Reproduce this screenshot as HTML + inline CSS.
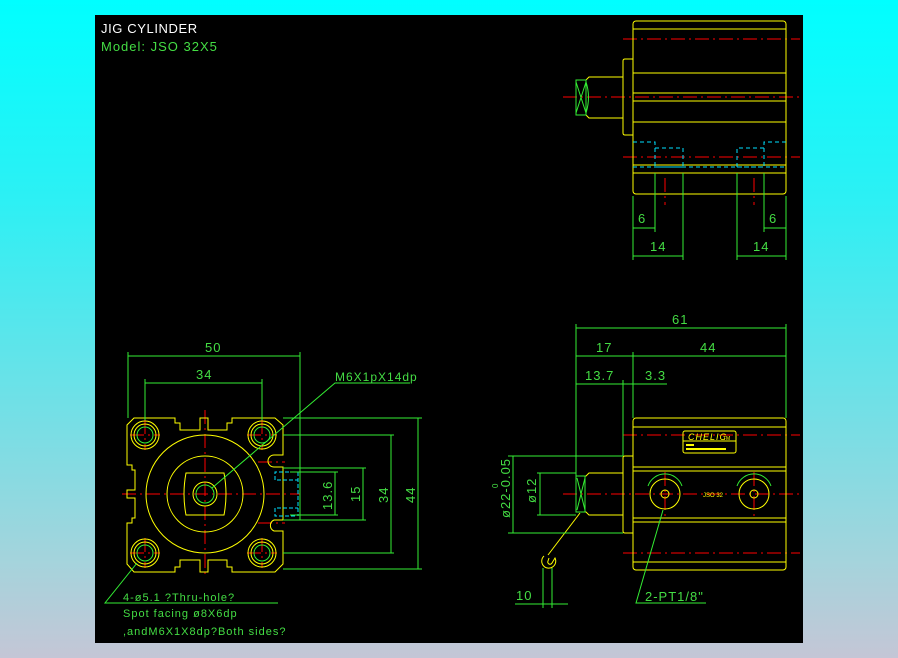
<!DOCTYPE html>
<html><head><meta charset="utf-8"><style>
html,body{margin:0;padding:0;width:898px;height:658px;overflow:hidden;background:linear-gradient(#00ffff 0%,#2cf0f4 30%,#a4d4dc 85%,#c4c6d6 100%);}
svg{position:absolute;left:0;top:0}
text{font-family:"Liberation Sans",sans-serif;}
</style></head><body>
<svg width="898" height="658" viewBox="0 0 898 658">
<rect x="95" y="15" width="708" height="628" fill="#000"/>
<text x="101" y="33" fill="#fff" font-size="13" letter-spacing="0.6">JIG  CYLINDER</text>
<text x="101" y="51" fill="#44dd44" font-size="13" letter-spacing="1">Model:  JSO  32X5</text>

<g fill="none" stroke-width="1">
<g stroke="#ff0000" stroke-dasharray="14,4,2,4">
<line x1="623" y1="39" x2="800" y2="39"/>
<line x1="563" y1="97" x2="800" y2="97"/>
<line x1="623" y1="157" x2="800" y2="157"/>
<line x1="665" y1="178" x2="665" y2="205"/>
<line x1="754" y1="178" x2="754" y2="205"/>
</g>
<g stroke="#ffff00">
<rect x="633" y="21" width="153" height="173" rx="3"/>
<line x1="633" y1="29" x2="786" y2="29"/>
<line x1="633" y1="73" x2="786" y2="73"/>
<line x1="633" y1="93" x2="786" y2="93"/>
<line x1="633" y1="101" x2="786" y2="101"/>
<line x1="633" y1="122" x2="786" y2="122"/>
<line x1="633" y1="165" x2="786" y2="165"/>
<line x1="633" y1="173" x2="786" y2="173"/>
<path d="M633 59 H625 Q623 59 623 61 V133 Q623 135 625 135 H633"/>
<path d="M623 77 H589 L586 80 M623 118 H589 L586 115"/>
</g>
<g stroke="#33ee33">
<rect x="576" y="80" width="10" height="35"/>
<path d="M576 82 L586 113 M586 82 L576 113"/>
<path d="M586 82 Q591 97 586 113"/>
</g>
<g stroke="#00e0ff" stroke-dasharray="4,3">
<path d="M633 142 H655 V148 H683 V167 M655 148 V167 H683"/>
<path d="M786 142 H764 V148 H737 V167 M764 148 V167 H737"/>
<line x1="633" y1="167" x2="786" y2="167"/>
</g>
<g stroke="#33ee33">
<line x1="633" y1="196" x2="633" y2="260"/>
<line x1="655" y1="173" x2="655" y2="232"/>
<line x1="683" y1="173" x2="683" y2="260"/>
<line x1="737" y1="173" x2="737" y2="260"/>
<line x1="764" y1="173" x2="764" y2="232"/>
<line x1="786" y1="196" x2="786" y2="260"/>
<line x1="633" y1="228" x2="655" y2="228"/>
<line x1="764" y1="228" x2="786" y2="228"/>
<line x1="633" y1="256" x2="683" y2="256"/>
<line x1="737" y1="256" x2="786" y2="256"/>
</g>

<g stroke="#ff0000" stroke-dasharray="14,4,2,4">
<line x1="122" y1="494" x2="300" y2="494"/>
<line x1="205" y1="410" x2="205" y2="578"/>
<line x1="130" y1="435" x2="160" y2="435"/><line x1="145" y1="420" x2="145" y2="450"/>
<line x1="247" y1="435" x2="277" y2="435"/><line x1="262" y1="420" x2="262" y2="450"/>
<line x1="130" y1="553" x2="160" y2="553"/><line x1="145" y1="538" x2="145" y2="568"/>
<line x1="247" y1="553" x2="277" y2="553"/><line x1="262" y1="538" x2="262" y2="568"/>
<line x1="258" y1="462" x2="285" y2="462"/><line x1="258" y1="523" x2="285" y2="523"/>
</g>
<g stroke="#ffff00">
<path d="M134 418 H175 V423 H180 V430 H200 V418 H208 V430 H227 V423 H232 V418 H275 L283 425 V455 H274 A6 6 0 0 0 274 467 H283 V520 H274 A6 6 0 0 0 274 531 H283 V564 L275 572 H232 V567 H227 V560 H208 V572 H200 V560 H180 V567 H175 V572 H134 L127 564 V523 H132 V518 H135 V498 H127 V490 H135 V470 H132 V465 H127 V425 Z"/>
<circle cx="205" cy="494" r="59"/>
<circle cx="205" cy="494" r="38"/>
<path d="M186 473 H224 Q228 494 224 515 H186 Q182 494 186 473 Z"/>
<circle cx="205" cy="494" r="12"/>
<circle cx="145" cy="435" r="14"/><circle cx="262" cy="435" r="14"/>
<circle cx="145" cy="553" r="14"/><circle cx="262" cy="553" r="14"/>
<circle cx="145" cy="435" r="11"/><circle cx="262" cy="435" r="11"/>
<circle cx="145" cy="553" r="11"/><circle cx="262" cy="553" r="11"/>
</g>
<g stroke="#33ee33">
<circle cx="205" cy="494" r="9"/>
<circle cx="145" cy="435" r="8"/><circle cx="262" cy="435" r="8"/>
<circle cx="145" cy="553" r="8"/><circle cx="262" cy="553" r="8"/>
<path d="M283 468 H300 V520 H283"/>
</g>
<g stroke="#00e0ff" stroke-dasharray="4,2">
<path d="M295 472 H275 V480 H298 M295 516 H275 V508 H298 M298 472 V516"/>
</g>
<g stroke="#33ee33">
<line x1="128" y1="352" x2="128" y2="418"/>
<line x1="300" y1="352" x2="300" y2="468"/>
<line x1="128" y1="356" x2="300" y2="356"/>
<line x1="145" y1="379" x2="145" y2="420"/>
<line x1="262" y1="379" x2="262" y2="420"/>
<line x1="145" y1="383" x2="262" y2="383"/>
<line x1="283" y1="418" x2="422" y2="418"/>
<line x1="283" y1="435" x2="394" y2="435"/>
<line x1="300" y1="468" x2="366" y2="468"/>
<line x1="300" y1="520" x2="366" y2="520"/>
<line x1="290" y1="472" x2="338" y2="472"/>
<line x1="290" y1="515" x2="338" y2="515"/>
<line x1="283" y1="553" x2="394" y2="553"/>
<line x1="283" y1="569" x2="422" y2="569"/>
<line x1="335" y1="472" x2="335" y2="515"/>
<line x1="363" y1="468" x2="363" y2="520"/>
<line x1="391" y1="435" x2="391" y2="553"/>
<line x1="418" y1="418" x2="418" y2="569"/>
<path d="M212 488 L335 383 H410"/>
<path d="M137 563 L105 603 H278"/>
</g>

<g stroke="#ff0000" stroke-dasharray="14,4,2,4">
<line x1="623" y1="435" x2="800" y2="435"/>
<line x1="563" y1="494" x2="800" y2="494"/>
<line x1="623" y1="553" x2="800" y2="553"/>
<line x1="665" y1="472" x2="665" y2="518"/>
<line x1="754" y1="472" x2="754" y2="518"/>
</g>
<g stroke="#ffff00">
<rect x="633" y="418" width="153" height="152" rx="3"/>
<line x1="633" y1="427" x2="786" y2="427"/>
<line x1="633" y1="467" x2="786" y2="467"/>
<line x1="633" y1="471" x2="786" y2="471"/>
<line x1="633" y1="518" x2="786" y2="518"/>
<line x1="633" y1="522" x2="786" y2="522"/>
<line x1="633" y1="562" x2="786" y2="562"/>
<path d="M633 456 H625 Q623 456 623 458 V531 Q623 533 625 533 H633"/>
<path d="M623 473 H589 L586 476 H576 M623 515 H589 L586 512 H576"/>
<circle cx="665" cy="494" r="15"/><circle cx="665" cy="494" r="4"/>
<circle cx="754" cy="494" r="15"/><circle cx="754" cy="494" r="4"/>
<rect x="683" y="431" width="53" height="22" rx="2"/>
<line x1="683" y1="441" x2="736" y2="441"/>
<path d="M580 513 L548 555"/>
<path d="M544 556 A7 7 0 1 0 555 558 L552 563 A2 2 0 0 1 548 561 L549 558"/>
</g>
<g stroke="#33ee33">
<path d="M648 486 A18 18 0 0 1 682 486"/>
<path d="M737 486 A18 18 0 0 1 771 486"/>
<rect x="576" y="476" width="9" height="36"/>
<path d="M577 478 L585 510 M585 478 L577 510"/>
<line x1="576" y1="324" x2="576" y2="476"/>
<line x1="633" y1="352" x2="633" y2="418"/>
<line x1="623" y1="380" x2="623" y2="456"/>
<line x1="786" y1="324" x2="786" y2="418"/>
<line x1="576" y1="328" x2="786" y2="328"/>
<line x1="576" y1="356" x2="786" y2="356"/>
<line x1="576" y1="384" x2="667" y2="384"/>
<line x1="508" y1="456" x2="623" y2="456"/>
<line x1="508" y1="533" x2="623" y2="533"/>
<line x1="513" y1="456" x2="513" y2="533"/>
<line x1="537" y1="473" x2="576" y2="473"/>
<line x1="537" y1="515" x2="576" y2="515"/>
<line x1="540" y1="473" x2="540" y2="515"/>
<line x1="543" y1="568" x2="543" y2="608"/>
<line x1="552" y1="568" x2="552" y2="608"/>
<line x1="515" y1="604" x2="568" y2="604"/>
<path d="M663 510 L636 603 H706"/>
</g>
</g>

<g fill="#44dd44" font-size="13" letter-spacing="1">
<text x="638" y="223">6</text>
<text x="769" y="223">6</text>
<text x="650" y="251">14</text>
<text x="753" y="251">14</text>
<text x="205" y="352">50</text>
<text x="196" y="379">34</text>
<text x="335" y="381" font-size="12">M6X1pX14dp</text>
<text x="332" y="510" transform="rotate(-90 332 510)">13.6</text>
<text x="360" y="502" transform="rotate(-90 360 502)">15</text>
<text x="388" y="503" transform="rotate(-90 388 503)">34</text>
<text x="415" y="503" transform="rotate(-90 415 503)">44</text>
<text x="123" y="601" font-size="11">4-ø5.1 ?Thru-hole?</text>
<text x="123" y="617" font-size="11">Spot facing ø8X6dp</text>
<text x="123" y="635" font-size="11">,andM6X1X8dp?Both sides?</text>
<text x="672" y="324">61</text>
<text x="596" y="352">17</text>
<text x="700" y="352">44</text>
<text x="585" y="380">13.7</text>
<text x="645" y="380">3.3</text>
<text x="510" y="518" transform="rotate(-90 510 518)">ø22-0.05</text>
<text x="498" y="488" transform="rotate(-90 498 488)" font-size="8">0</text>
<text x="536" y="503" transform="rotate(-90 536 503)">ø12</text>
<text x="516" y="600">10</text>
<text x="645" y="601">2-PT1/8"</text>
</g>
<g fill="#ffff00">
<text x="688" y="440" font-size="9" font-style="italic" letter-spacing="1">CHELIC</text>
<text x="723" y="440" font-size="5">TM</text>
<rect x="686" y="444" width="8" height="2"/>
<rect x="686" y="448" width="40" height="2"/>
<text x="703" y="497" font-size="6">JSO 32</text>
</g>
</svg>
</body></html>
